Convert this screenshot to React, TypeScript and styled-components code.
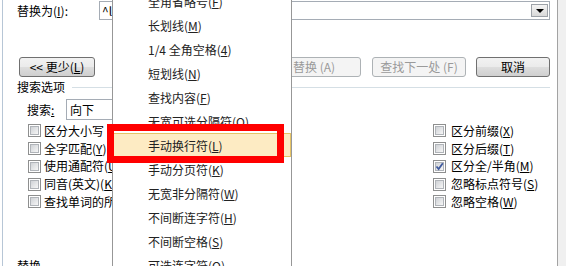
import React from 'react';
import styled, { createGlobalStyle } from 'styled-components';

const GlobalStyle = createGlobalStyle`
  html, body {
    margin: 0;
    padding: 0;
    background: #fff;
  }
  body {
    font-family: "Noto Sans CJK SC", "Noto Sans", sans-serif;
  }
`;

const Page = styled.div`
  position: relative;
  width: 566px;
  height: 266px;
  overflow: hidden;
  display: flex;
  background: #fff;
`;

const Dialog = styled.div`
  flex: 1;
  margin-left: 2px;
  border-left: 1px solid #b7c6d6;
  border-right: 1px solid #a3a3a3;
  padding: 1px 7px 0 14px;
  font-size: 12px;
  line-height: 14px;
  color: #000;
`;

const SideStrip = styled.div`
  width: 8px;
  background: #f0f0f0;
`;

const FieldRow = styled.div`
  display: flex;
  align-items: center;
  height: 19px;
`;

const FieldLabel = styled.span`
  width: 82px;
  flex-shrink: 0;
`;

const TextBox = styled.div`
  flex: 1;
  height: 19px;
  box-sizing: border-box;
  border: 1px solid #a5acb5;
  display: flex;
  align-items: center;
  justify-content: space-between;
  padding: 0 1px 0 2px;
`;

const DropButton = styled.div`
  width: 17px;
  height: 13px;
  box-sizing: border-box;
  border: 1px solid #9da2a8;
  background: linear-gradient(#f4f4f4, #d9d9d9);
  display: flex;
  align-items: center;
  justify-content: center;
`;

const Arrow = styled.div`
  width: 0;
  height: 0;
  border-left: 4px solid transparent;
  border-right: 4px solid transparent;
  border-top: 4px solid #000;
`;

const ButtonRow = styled.div`
  display: flex;
  align-items: center;
  margin-top: 37px;
  height: 20px;
`;

const Spacer = styled.div`
  flex: 1;
`;

const Button = styled.div<{ $w: number; $gap?: number; $disabled?: boolean }>`
  width: ${(p) => p.$w}px;
  margin-left: ${(p) => p.$gap ?? 0}px;
  height: 20px;
  box-sizing: border-box;
  border: 1px solid ${(p) => (p.$disabled ? '#adb2b5' : '#707070')};
  border-radius: 3px;
  background: ${(p) =>
    p.$disabled
      ? '#f4f4f4'
      : 'linear-gradient(#f2f2f2 0%, #ebebeb 48%, #dddddd 52%, #cfcfcf 100%)'};
  color: ${(p) => (p.$disabled ? '#9a9a9a' : '#000')};
  display: flex;
  align-items: center;
  justify-content: center;
  white-space: nowrap;
`;

const GroupHeader = styled.div`
  display: flex;
  align-items: center;
  margin-top: 3px;
  height: 14px;
`;

const GroupLine = styled.div`
  flex: 1;
  height: 1px;
  margin-left: 7px;
  background: #d5dfe5;
`;

const SearchRow = styled.div`
  display: flex;
  align-items: center;
  margin-top: 5px;
  height: 21px;
  padding-left: 10px;
`;

const SearchLabel = styled.span`
  width: 39px;
`;

const Combo = styled.div`
  width: 130px;
  height: 21px;
  box-sizing: border-box;
  border: 1px solid #a5acb5;
  padding-left: 3px;
  display: flex;
  align-items: center;
`;

const Options = styled.div`
  display: flex;
  margin-top: 2px;
  padding-left: 11px;
`;

const OptionColumn = styled.div<{ $w?: number }>`
  width: ${(p) => (p.$w ? `${p.$w}px` : 'auto')};
  display: flex;
  flex-direction: column;
`;

const CheckRow = styled.div<{ $gap: number }>`
  display: flex;
  align-items: center;
  height: 17.75px;
  gap: ${(p) => p.$gap}px;
  white-space: nowrap;
`;

const Box = styled.div`
  width: 13px;
  height: 13px;
  box-sizing: border-box;
  border: 1px solid #8e8f8f;
  padding: 1px;
  background: #fff;
  flex-shrink: 0;
  position: relative;
`;

const BoxFill = styled.div`
  width: 100%;
  height: 100%;
  box-sizing: border-box;
  border: 1px solid #b0b4b9;
  background: linear-gradient(135deg, #cfd2d6, #f6f6f6);
`;

const Tick = styled.svg`
  position: absolute;
  left: 1px;
  top: 1px;
`;

const BottomLabel = styled.div`
  margin-top: 48px;
`;

const Menu = styled.div`
  position: absolute;
  left: 112px;
  top: -11px;
  width: 180px;
  box-sizing: border-box;
  border-left: 1px solid #979797;
  border-right: 1px solid #979797;
  background: #fff;
  font-family: "Noto Sans CJK SC", "Noto Sans", sans-serif;
  font-size: 12px;
  color: #222;
`;

const MenuItem = styled.div<{ $active?: boolean }>`
  height: 24px;
  box-sizing: border-box;
  border: 1px solid ${(p) => (p.$active ? '#e5c365' : 'transparent')};
  background: ${(p) => (p.$active ? '#fdebc3' : 'transparent')};
  padding-left: 34px;
  display: flex;
  align-items: center;
  white-space: nowrap;
`;

const Callout = styled.div`
  position: absolute;
  left: 107px;
  top: 124px;
  width: 177px;
  height: 39px;
  box-sizing: border-box;
  border: 7px solid #ff0000;
`;

const Check: React.FC<{ label: React.ReactNode; checked?: boolean; gap: number }> = ({
  label,
  checked,
  gap,
}) => (
  <CheckRow $gap={gap}>
    <Box>
      <BoxFill />
      {checked && (
        <Tick width="9" height="9" viewBox="0 0 9 9">
          <path d="M1.5 4.5 L3.6 7 L7.8 1.2" fill="none" stroke="#3f5a9e" strokeWidth="1.8" />
        </Tick>
      )}
    </Box>
    <span>{label}</span>
  </CheckRow>
);

const menuItems: [string, string, string][] = [
  ['全角省略号(', 'F', ')'],
  ['长划线(', 'M', ')'],
  ['1/4 全角空格(', '4', ')'],
  ['短划线(', 'N', ')'],
  ['查找内容(', 'F', ')'],
  ['无宽可选分隔符(', 'O', ')'],
  ['手动换行符(', 'L', ')'],
  ['手动分页符(', 'K', ')'],
  ['无宽非分隔符(', 'W', ')'],
  ['不间断连字符(', 'H', ')'],
  ['不间断空格(', 'S', ')'],
  ['可选连字符(', 'O', ')'],
];

const App: React.FC = () => {
  return (
    <Page>
      <GlobalStyle />
      <Dialog>
        <FieldRow>
          <FieldLabel>
            替换为(<u>I</u>):
          </FieldLabel>
          <TextBox>
            <span>^l</span>
            <DropButton>
              <Arrow />
            </DropButton>
          </TextBox>
        </FieldRow>

        <ButtonRow>
          <Button $w={76} $gap={2}>
            &lt;&lt; 更少(<u>L</u>)
          </Button>
          <Spacer />
          <Button $w={94} $disabled>
            替换 (A)
          </Button>
          <Button $w={94} $gap={11} $disabled>
            查找下一处 (F)
          </Button>
          <Button $w={74} $gap={10}>
            取消
          </Button>
        </ButtonRow>

        <GroupHeader>
          <span>搜索选项</span>
          <GroupLine />
        </GroupHeader>

        <SearchRow>
          <SearchLabel>
            搜索<u>:</u>
          </SearchLabel>
          <Combo>向下</Combo>
        </SearchRow>

        <Options>
          <OptionColumn $w={405}>
            <Check gap={3} label={<>区分大小写</>} />
            <Check gap={3} label={<>全字匹配(<u>Y</u>)</>} />
            <Check gap={3} label={<>使用通配符(<u>U</u>)</>} />
            <Check gap={3} label={<>同音(英文)(<u>K</u>)</>} />
            <Check gap={3} label={<>查找单词的所有形式(英文)(<u>W</u>)</>} />
          </OptionColumn>
          <OptionColumn>
            <Check gap={5} label={<>区分前缀(<u>X</u>)</>} />
            <Check gap={5} label={<>区分后缀(<u>T</u>)</>} />
            <Check gap={5} checked label={<>区分全/半角(<u>M</u>)</>} />
            <Check gap={5} label={<>忽略标点符号(<u>S</u>)</>} />
            <Check gap={5} label={<>忽略空格(<u>W</u>)</>} />
          </OptionColumn>
        </Options>

        <BottomLabel>替换</BottomLabel>
      </Dialog>
      <SideStrip />

      <Menu>
        {menuItems.map(([a, key, b], i) => (
          <MenuItem key={i} $active={i === 6}>
            {a}
            <u>{key}</u>
            {b}
          </MenuItem>
        ))}
      </Menu>
      <Callout />
    </Page>
  );
};

export default App;
